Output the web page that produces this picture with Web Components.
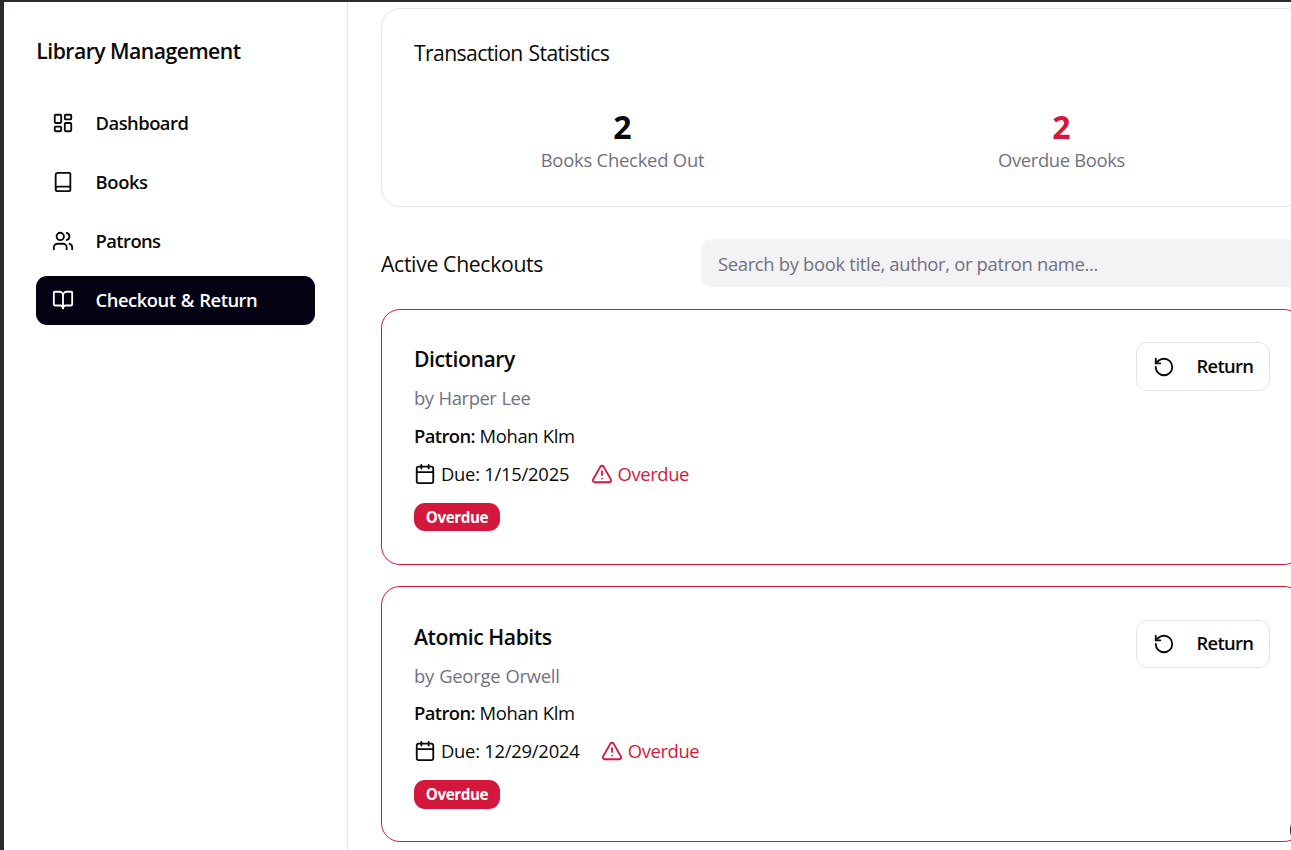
<!DOCTYPE html>
<html lang="en">
<head>
<meta charset="utf-8">
<title>Library Management</title>
<style>
  html, body { margin: 0; height: 100%; overflow: hidden; }
  body { font-family: "Open Sans", "Noto Sans", sans-serif; color: #0a0a0a; background: #fff; font-size: 18.4px; }
</style>
</head>
<body>
<library-app></library-app>
<script>
const ICONS = {
  dashboard: '<rect width="7" height="9" x="3" y="3" rx="1"/><rect width="7" height="5" x="14" y="3" rx="1"/><rect width="7" height="9" x="14" y="12" rx="1"/><rect width="7" height="5" x="3" y="16" rx="1"/>',
  book: '<path d="M4 19.5v-15A2.5 2.5 0 0 1 6.5 2H19a1 1 0 0 1 1 1v18a1 1 0 0 1-1 1H6.5a1 1 0 0 1 0-5H20"/>',
  users: '<path d="M16 21v-2a4 4 0 0 0-4-4H6a4 4 0 0 0-4 4v2"/><circle cx="9" cy="7" r="4"/><path d="M22 21v-2a4 4 0 0 0-3-3.87"/><path d="M16 3.13a4 4 0 0 1 0 7.75"/>',
  open: '<path d="M12 7v14"/><path d="M3 18a1 1 0 0 1-1-1V4a1 1 0 0 1 1-1h5a4 4 0 0 1 4 4 4 4 0 0 1 4-4h5a1 1 0 0 1 1 1v13a1 1 0 0 1-1 1h-6a3 3 0 0 0-3 3 3 3 0 0 0-3-3z"/>',
  rotate: '<path d="M3 12a9 9 0 1 0 9-9 9.75 9.75 0 0 0-6.74 2.74L3 8"/><path d="M3 3v5h5"/>',
  calendar: '<path d="M8 2v4"/><path d="M16 2v4"/><rect width="18" height="18" x="3" y="4" rx="2"/><path d="M3 10h18"/>',
  alert: '<path d="m21.73 18-8-14a2 2 0 0 0-3.48 0l-8 14A2 2 0 0 0 4 21h16a2 2 0 0 0 1.73-3"/><path d="M12 9v4"/><path d="M12 17h.01"/>'
};
function define(name, html) {
  const t = document.createElement('template');
  t.innerHTML = html;
  customElements.define(name, class extends HTMLElement {
    constructor() {
      super();
      this.attachShadow({ mode: 'open' }).append(t.content.cloneNode(true));
    }
  });
}

customElements.define('ui-icon', class extends HTMLElement {
  connectedCallback() {
    if (this.shadowRoot) return;
    this.attachShadow({ mode: 'open' }).innerHTML = `
      <style>:host{display:block;flex:none;width:22px;height:22px}svg{display:block}</style>
      <svg width="22" height="22" viewBox="0 0 24 24" fill="none" stroke="currentColor" stroke-width="2" stroke-linecap="round" stroke-linejoin="round">${ICONS[this.getAttribute('name')]}</svg>`;
  }
});

define('nav-item', `
  <style>
    :host{display:flex;align-items:center;height:48px;padding-left:15.6px;gap:22px;border-radius:11px;font-weight:600;line-height:28px;white-space:nowrap}
    :host([active]){background:#030213;color:#fff;padding-bottom:1px}
  </style>
  <slot name="icon"></slot><span><slot></slot></span>`);

define('side-bar', `
  <style>
    :host{display:block;box-sizing:border-box;width:344px;flex:none;border-right:1px solid #e5e5e5;padding:32px 32px 0}
    h1{margin:0 0 31px .3px;font-size:21.2px;line-height:34px;font-weight:600;white-space:nowrap;letter-spacing:-.53px}
    nav{display:flex;flex-direction:column;gap:11px}
  </style>
  <h1>Library Management</h1>
  <nav>
    <nav-item style="letter-spacing:-.53px"><ui-icon slot="icon" name="dashboard"></ui-icon>Dashboard</nav-item>
    <nav-item style="letter-spacing:-.4px"><ui-icon slot="icon" name="book"></ui-icon>Books</nav-item>
    <nav-item style="letter-spacing:-.6px"><ui-icon slot="icon" name="users"></ui-icon>Patrons</nav-item>
    <nav-item active style="letter-spacing:-.48px;word-spacing:1px"><ui-icon slot="icon" name="open"></ui-icon>Checkout &amp; Return</nav-item>
  </nav>`);

define('stat-figure', `
  <style>
    :host{display:block;text-align:center}
    .n{font-size:32px;line-height:36px;font-weight:700;letter-spacing:0;margin-bottom:1px}
    .l{color:#717182;line-height:28px}
    :host([danger]) .n{color:#d4183d}
  </style>
  <div class="n"><slot name="value"></slot></div><div class="l"><slot></slot></div>`);

define('stats-card', `
  <style>
    :host{display:block;box-sizing:border-box;height:199px;border:1px solid #e5e5e5;border-radius:19px;padding:27px 32px 0}
    h2{margin:0 0 39px;font-size:21.2px;line-height:34px;font-weight:400;letter-spacing:-.64px;word-spacing:1px}
    .grid{display:grid;grid-template-columns:1fr 1fr;gap:22px}
  </style>
  <h2>Transaction Statistics</h2>
  <div class="grid">
    <stat-figure style="letter-spacing:-.22px"><span slot="value">2</span>Books Checked Out</stat-figure>
    <stat-figure danger style="letter-spacing:-.33px"><span slot="value">2</span>Overdue Books</stat-figure>
  </div>`);

define('return-button', `
  <style>
    button{all:unset;display:flex;align-items:center;box-sizing:border-box;width:134px;height:var(--button-height,49px);border:1px solid #e5e5e5;border-radius:11px;padding-left:15.5px;gap:22px;font-weight:600;background:#fff;letter-spacing:-.7px}
    span{line-height:26px;padding-bottom:2px}
  </style>
  <button><ui-icon name="rotate"></ui-icon><span>Return</span></button>`);

define('checkout-card', `
  <style>
    :host{display:flex;justify-content:space-between;align-items:flex-start;box-sizing:border-box;height:256px;border:1px solid #d4183d;border-radius:19px;padding:var(--card-top,32px) 32px 0}
    .info{display:flex;flex-direction:column;align-items:flex-start}
    h3{margin:0;font-size:21.2px;line-height:34px;font-weight:600;letter-spacing:-.45px}
    .by{color:#717182;line-height:28px;margin-top:8px;letter-spacing:var(--by-spacing,-.42px);word-spacing:.6px}
    .patron{display:flex;gap:4.6px;line-height:28px;margin-top:var(--patron-gap,10px);letter-spacing:-.32px}
    b{font-weight:600;letter-spacing:-.6px}
    .due{display:flex;align-items:center;line-height:28px;margin-top:10px;letter-spacing:-.25px}
    .due ui-icon{margin-right:5px}
    .late{display:flex;align-items:center;color:#d4183d;margin-left:21.4px;letter-spacing:-.4px}
    .badge{margin-top:15px;height:var(--badge-height,28px);width:86px;border-radius:11px;background:#d4183d;color:#fff;font-size:15.2px;font-weight:700;line-height:29px;text-align:center;letter-spacing:-.4px}
  </style>
  <div class="info">
    <h3><slot name="title"></slot></h3>
    <div class="by">by <slot name="author"></slot></div>
    <div class="patron"><b>Patron:</b><slot name="patron"></slot></div>
    <div class="due"><ui-icon name="calendar"></ui-icon><span>Due: <slot name="due"></slot></span>
      <div class="late"><ui-icon name="alert"></ui-icon><span>Overdue</span></div></div>
    <div class="badge">Overdue</div>
  </div>
  <return-button></return-button>`);

define('checkout-header', `
  <style>
    :host{display:flex;justify-content:space-between;align-items:center;height:48px}
    h2{margin:2px 0 0;font-size:21.2px;line-height:34px;font-weight:400;letter-spacing:-.33px}
    .search{box-sizing:border-box;width:602px;height:48px;border-radius:11px;background:#f3f3f5;color:#717182;padding:0 17px;line-height:50px;letter-spacing:-.32px}
  </style>
  <h2>Active Checkouts</h2>
  <div class="search">Search by book title, author, or patron name...</div>`);

define('help-button', `
  <style>:host{display:block;position:absolute;left:1286px;top:810px;width:36px;height:36px;border-radius:50%;background:#222}</style>`);

define('library-app', `
  <style>
    :host{display:flex;box-sizing:border-box;width:1291px;height:850px;overflow:hidden;border-left:4px solid #2c2a2a;border-top:2px solid #2c2a2a;position:relative}
    main{flex:none;width:922px;padding:6px 0 0 33px}
    checkout-header{margin:32px 0 22px}
    checkout-card + checkout-card{margin-top:21px;--card-top:33px;--patron-gap:9px;--by-spacing:-.24px;--button-height:48px;--badge-height:29px}
  </style>
  <side-bar></side-bar>
  <main>
    <stats-card></stats-card>
    <checkout-header></checkout-header>
    <checkout-card><span slot="title">Dictionary</span><span slot="author">Harper Lee</span><span slot="patron">Mohan Klm</span><span slot="due">1/15/2025</span></checkout-card>
    <checkout-card><span slot="title">Atomic Habits</span><span slot="author">George Orwell</span><span slot="patron">Mohan Klm</span><span slot="due">12/29/2024</span></checkout-card>
  </main>
  <help-button></help-button>`);
</script>
</body>
</html>
